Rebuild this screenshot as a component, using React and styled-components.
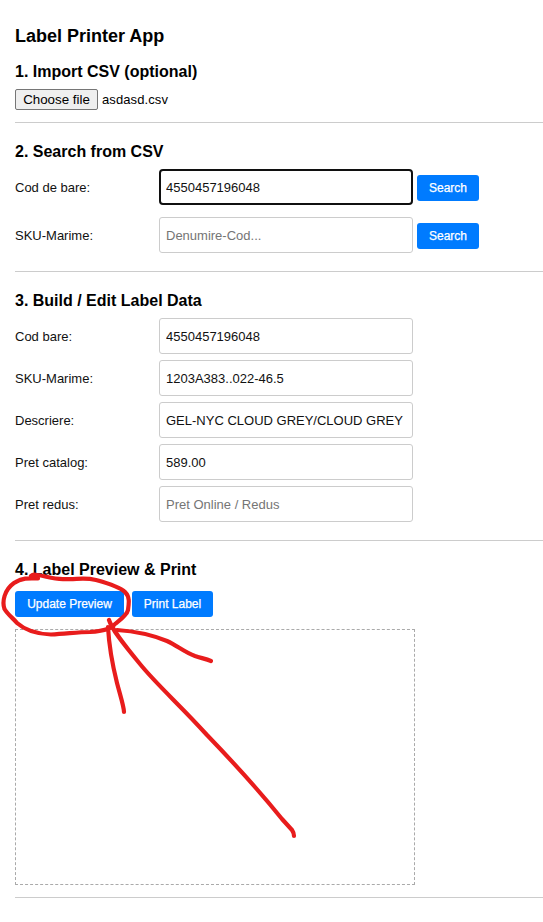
import React from 'react';
import styled, { createGlobalStyle } from 'styled-components';

const GlobalStyle = createGlobalStyle`
  * { box-sizing: border-box; }
  body {
    margin: 0;
    background: #fff;
    color: #000;
    font-family: "Liberation Sans", Arial, sans-serif;
    font-size: 13px;
    overflow: hidden;
  }
`;

const Page = styled.main`
  position: relative;
  min-height: 922px;
  padding: 26px 0 0 15px;
`;

const Title = styled.h1`
  margin: 0 0 15px;
  font-size: 18px;
  line-height: 21px;
`;

const Section = styled.section`
  height: ${({ $height }) => $height}px;
  border-bottom: 1px solid #ccc;
  padding-top: ${({ $top = 19 }) => $top}px;
`;

const SectionTitle = styled.h2`
  margin: 0 0 7px;
  font-size: 16px;
  line-height: 20px;
`;

const FilePicker = styled.div`
  display: flex;
  align-items: center;
  gap: 4px;
`;

const FileName = styled.span`
  letter-spacing: 0.1px;
`;

const FileButton = styled.button`
  width: 83px;
  height: 21px;
  padding: 0;
  border: 1px solid #767676;
  border-radius: 2px;
  background: #efefef;
  color: #000;
  font: 13.333px "Liberation Sans", Arial, sans-serif;
`;

const Rows = styled.div`
  display: flex;
  flex-direction: column;
  gap: ${({ $gap }) => $gap}px;
`;

const Row = styled.div`
  display: flex;
  align-items: center;
  height: 36px;
`;

const Label = styled.label`
  width: 144px;
  color: #111;
`;

const Input = styled.input`
  width: 254px;
  height: 36px;
  margin: 0 4px 0 0;
  padding: ${({ $focused }) => ($focused ? '0 5px' : '0 6px')};
  border: ${({ $focused }) => ($focused ? '2px solid #101010' : '1px solid #ccc')};
  border-radius: ${({ $focused }) => ($focused ? 4 : 3)}px;
  outline: none;
  background: #fff;
  color: #111;
  font: 13px "Liberation Sans", Arial, sans-serif;
  &::placeholder { color: #757575; opacity: 1; }
`;

const Button = styled.button`
  width: ${({ $width = 62 }) => $width}px;
  height: 26px;
  padding: 0;
  border: 0;
  border-radius: 3px;
  background: #007bff;
  color: #fff;
  font: 12px "Liberation Sans", Arial, sans-serif;
  -webkit-text-stroke: 0.25px #fff;
`;

const SearchButton = styled(Button)`
  margin-top: 2px;
`;

const Actions = styled.div`
  display: flex;
  gap: 8px;
  padding-top: 4px;
  margin-bottom: 12px;
`;

const Preview = styled.div`
  width: 400px;
  height: 256px;
  border: 1px dashed #aaa;
`;

const Annotation = styled.svg`
  position: absolute;
  left: 0;
  top: 0;
  pointer-events: none;
`;

const fields = [
  { label: 'Cod bare:', value: '4550457196048' },
  { label: 'SKU-Marime:', value: '1203A383..022-46.5' },
  { label: 'Descriere:', value: 'GEL-NYC CLOUD GREY/CLOUD GREY' },
  { label: 'Pret catalog:', value: '589.00' },
  { label: 'Pret redus:', value: '', placeholder: 'Pret Online / Redus' },
];

export default function App() {
  return (
    <>
      <GlobalStyle />
      <Page>
        <Title>Label Printer App</Title>
        <Section $height={61} $top={0}>
          <SectionTitle>1. Import CSV (optional)</SectionTitle>
          <FilePicker>
            <FileButton>Choose file</FileButton>
            <FileName>asdasd.csv</FileName>
          </FilePicker>
        </Section>
        <Section $height={149}>
          <SectionTitle>2. Search from CSV</SectionTitle>
          <Rows $gap={12}>
            <Row>
              <Label>Cod de bare:</Label>
              <Input $focused defaultValue="4550457196048" />
              <SearchButton>Search</SearchButton>
            </Row>
            <Row>
              <Label>SKU-Marime:</Label>
              <Input placeholder="Denumire-Cod..." />
              <SearchButton>Search</SearchButton>
            </Row>
          </Rows>
        </Section>
        <Section $height={269}>
          <SectionTitle>3. Build / Edit Label Data</SectionTitle>
          <Rows $gap={6}>
            {fields.map(({ label, value, placeholder }) => (
              <Row key={label}>
                <Label>{label}</Label>
                <Input defaultValue={value} placeholder={placeholder} />
              </Row>
            ))}
          </Rows>
        </Section>
        <Section $height={357}>
          <SectionTitle>4. Label Preview &amp; Print</SectionTitle>
          <Actions>
            <Button $width={109}>Update Preview</Button>
            <Button $width={81}>Print Label</Button>
          </Actions>
          <Preview />
        </Section>
        <Annotation
          width="543"
          height="922"
          viewBox="0 0 543 922"
          fill="none"
          stroke="#e81c1c"
          strokeWidth="4.2"
          strokeLinecap="round"
          strokeLinejoin="round"
        >
          <path d="M38 578.5C29 578 21 578 14 583C4 590 2 602 4.500 609C8 615 14 619 17 623C26 631 36 634 51 634.5C66 634 77 632 90 632C104 631 111 629 115 624C121 619 127 615 128 610C129 603 130 597 125 592C120 587 107 583 96 580C83 577 75 580 66 579C54 580 46 576 37 575C34 574 32 575 31 576" />
          <path d="M109 620C112 629 120 640 140 664C157 685 181 706 207 735C233 762 261 793 282 819L292 830Q294 833 294 836" />
          <path d="M108 627C109 645 112 663 117 683C121 698 124 707 124 712" />
          <path d="M117 630C132 631 150 634 167 641C178 646 184 652 195 656C201 658 206 659 211 661" />
        </Annotation>
      </Page>
    </>
  );
}
